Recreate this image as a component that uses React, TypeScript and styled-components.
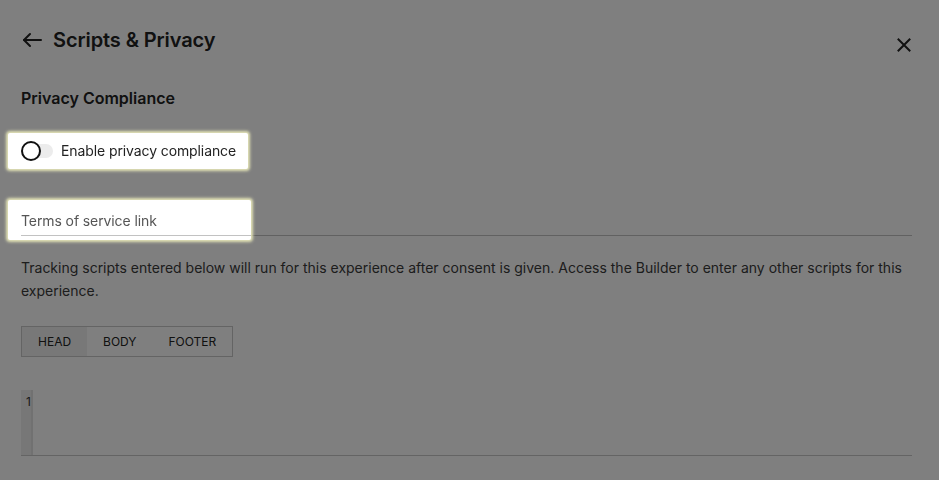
import React, { useState } from 'react'
import styled, { createGlobalStyle } from 'styled-components'

const GlobalStyle = createGlobalStyle`
  html, body {
    margin: 0;
    padding: 0;
    background: #ffffff;
    font-family: Inter, 'Noto Sans', 'Liberation Sans', sans-serif;
    color: #222;
  }
`

const Page = styled.div`
  position: relative;
  min-height: 480px;
  padding: 0 27px 0 21px;
  box-sizing: border-box;
  overflow: hidden;
`

const Overlay = styled.div`
  position: fixed;
  inset: 0;
  background: rgba(0, 0, 0, 0.5);
  z-index: 10;
`

const Header = styled.div`
  display: flex;
  justify-content: space-between;
  align-items: flex-start;
  padding-top: 26px;
`

const TitleRow = styled.div`
  display: flex;
  align-items: center;
  gap: 10px;
  height: 28px;
`

const IconButton = styled.button`
  display: flex;
  align-items: center;
  justify-content: center;
  padding: 0;
  border: none;
  background: none;
  color: #222;
  cursor: pointer;
`

const BackButton = styled(IconButton)`
  margin-left: 1px;
`

const CloseButton = styled(IconButton)`
  margin-top: 12px;
  margin-right: 1px;
`

const Title = styled.h1`
  margin: 0;
  font-size: 20px;
  font-weight: 600;
  letter-spacing: -0.1px;
  color: #222;
`

const SectionTitle = styled.h2`
  margin: 32px 0 0;
  font-size: 16px;
  font-weight: 600;
  line-height: 24px;
  color: #222;
`

const Spotlight = styled.div`
  position: relative;
  z-index: 11;
  background: #fff;
  border-radius: 2px;
  margin-left: -13px;
  padding-left: 13px;
  box-shadow: 0 0 3px 2px rgba(240, 240, 190, 0.9);
`

const ToggleSpot = styled(Spotlight)`
  display: inline-flex;
  align-items: center;
  gap: 8px;
  height: 36px;
  width: 227px;
  margin-top: 23px;
`

const Track = styled.button<{ $on: boolean }>`
  position: relative;
  width: 32px;
  height: 14px;
  padding: 0;
  border: none;
  border-radius: 7px;
  background: ${(p) => (p.$on ? '#7aa5ff' : '#ececec')};
  cursor: pointer;
`

const Knob = styled.span<{ $on: boolean }>`
  position: absolute;
  top: -3px;
  left: ${(p) => (p.$on ? '13px' : '0')};
  width: 16px;
  height: 16px;
  border: 2px solid #111;
  border-radius: 50%;
  background: #fff;
`

const ToggleLabel = styled.span`
  font-size: 14px;
  line-height: 18px;
  margin-top: -1px;
  letter-spacing: -0.1px;
  color: #222;
`

const FieldRow = styled.div`
  display: flex;
  align-items: flex-end;
  margin-top: 31px;
`

const FieldSpot = styled(Spotlight)`
  width: 230px;
  height: 36px;
  padding-bottom: 4px;
  box-sizing: content-box;
  display: flex;
  align-items: flex-end;
`

const Field = styled.label`
  flex: 1;
  display: flex;
  align-items: flex-end;
  height: 36px;
  padding-bottom: 6px;
  box-sizing: border-box;
  border-bottom: 1px solid #c2c2c2;
  font-size: 14px;
  letter-spacing: -0.1px;
  color: #555;
`

const FieldRest = styled.div`
  flex: 1;
  margin-bottom: 4px;
  border-bottom: 1px solid #c2c2c2;
`

const Help = styled.p`
  margin: 16px 0 0;
  font-size: 14px;
  line-height: 23px;
  color: #3a3a3a;
`

const Tabs = styled.div`
  display: inline-flex;
  margin-top: 24px;
  border: 1px solid #c8c8c8;
`

const Tab = styled.button<{ $active: boolean }>`
  height: 29px;
  padding: 0 16px;
  border: none;
  background: ${(p) => (p.$active ? '#f1f1f1' : '#fff')};
  font-family: inherit;
  font-size: 12px;
  color: #222;
  cursor: pointer;
`

const Editor = styled.div`
  display: flex;
  height: 65px;
  margin-top: 33px;
  border-bottom: 1px solid #c8c8c8;
`

const Gutter = styled.div`
  width: 5px;
  padding: 4px 0 0 5px;
  background: #eeeeee;
  border-right: 2px solid #e2e2e2;
  font-size: 12px;
  color: #333;
`

const Code = styled.div`
  flex: 1;
`

const tabs = ['HEAD', 'BODY', 'FOOTER']

export default function App() {
  const [on, setOn] = useState(false)
  const [tab, setTab] = useState('HEAD')

  return (
    <>
      <GlobalStyle />
      <Page>
        <Overlay />
        <Header>
          <TitleRow>
            <BackButton aria-label="Back">
              <svg width="21" height="20" viewBox="0 0 21 20" fill="none" stroke="currentColor" strokeWidth="2" strokeLinecap="round" strokeLinejoin="round">
                <path d="M19 10H2" />
                <path d="M8 4l-6 6 6 6" />
              </svg>
            </BackButton>
            <Title>Scripts &amp; Privacy</Title>
          </TitleRow>
          <CloseButton aria-label="Close">
            <svg width="14" height="14" viewBox="0 0 14 14" fill="none" stroke="currentColor" strokeWidth="2" strokeLinecap="square">
              <path d="M1.5 1.5l11 11M12.5 1.5l-11 11" />
            </svg>
          </CloseButton>
        </Header>

        <SectionTitle>Privacy Compliance</SectionTitle>

        <ToggleSpot>
          <Track $on={on} onClick={() => setOn(!on)} aria-label="Enable privacy compliance">
            <Knob $on={on} />
          </Track>
          <ToggleLabel>Enable privacy compliance</ToggleLabel>
        </ToggleSpot>

        <FieldRow>
          <FieldSpot>
            <Field>Terms of service link</Field>
          </FieldSpot>
          <FieldRest />
        </FieldRow>

        <Help>
          Tracking scripts entered below will run for this experience after consent is given. Access the Builder to enter any other scripts for this experience.
        </Help>

        <Tabs>
          {tabs.map((t) => (
            <Tab key={t} $active={tab === t} onClick={() => setTab(t)}>
              {t}
            </Tab>
          ))}
        </Tabs>

        <Editor>
          <Gutter>1</Gutter>
          <Code />
        </Editor>
      </Page>
    </>
  )
}
